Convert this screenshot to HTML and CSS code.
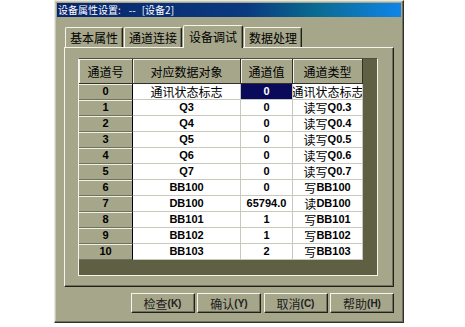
FILE: index.html
```html
<!DOCTYPE html>
<html>
<head>
<meta charset="utf-8">
<link rel="stylesheet" href="styles.css">
</head>
<body>
<div class="dialog">
  <div class="titlebar"><span>设备属性设置:</span><span class="dash">--</span><span>[设备2]</span></div>
  <div class="tabs">
    <div class="tab">基本属性</div>
    <div class="tab">通道连接</div>
    <div class="tab active">设备调试</div>
    <div class="tab">数据处理</div>
  </div>
  <div class="panel">
    <div class="grid">
      <div class="table">
        <div class="h first">通道号</div><div class="h">对应数据对象</div><div class="h">通道值</div><div class="h last">通道类型</div>

        <div class="rh">0</div><div class="c"><span class="n">通讯状态标志</span></div><div class="c sel">0</div><div class="c clip"><span class="n">通讯状态标志</span></div>
        <div class="rh">1</div><div class="c">Q3</div><div class="c">0</div><div class="c"><span class="n">读写</span>Q0.3</div>
        <div class="rh">2</div><div class="c">Q4</div><div class="c">0</div><div class="c"><span class="n">读写</span>Q0.4</div>
        <div class="rh">3</div><div class="c">Q5</div><div class="c">0</div><div class="c"><span class="n">读写</span>Q0.5</div>
        <div class="rh">4</div><div class="c">Q6</div><div class="c">0</div><div class="c"><span class="n">读写</span>Q0.6</div>
        <div class="rh">5</div><div class="c">Q7</div><div class="c">0</div><div class="c"><span class="n">读写</span>Q0.7</div>
        <div class="rh">6</div><div class="c">BB100</div><div class="c">0</div><div class="c"><span class="n">写</span>BB100</div>
        <div class="rh">7</div><div class="c">DB100</div><div class="c">65794.0</div><div class="c"><span class="n">读</span>DB100</div>
        <div class="rh">8</div><div class="c">BB101</div><div class="c">1</div><div class="c"><span class="n">写</span>BB101</div>
        <div class="rh">9</div><div class="c">BB102</div><div class="c">1</div><div class="c"><span class="n">写</span>BB102</div>
        <div class="rh">10</div><div class="c">BB103</div><div class="c">2</div><div class="c"><span class="n">写</span>BB103</div>
      </div>
    </div>
  </div>
  <div class="buttons">
    <div class="btn"><span class="n">检查</span>(K)</div>
    <div class="btn"><span class="n">确认</span>(Y)</div>
    <div class="btn"><span class="n">取消</span>(C)</div>
    <div class="btn"><span class="n">帮助</span>(H)</div>
  </div>
</div>
</body>
</html>
```
FILE: styles.css
```css
* { box-sizing: border-box; }
body {
  margin: 0;
  background: #fff;
  font-family: "Liberation Sans", "Noto Sans CJK SC", sans-serif;
  color: #000;
}
.n { font-weight: normal; font-family: "Noto Sans CJK SC", sans-serif; }

.dialog {
  margin-left: 54px;
  width: 350px;
  height: 323px;
  background: #a6a68b;
  border-left: 1px solid #e8e8e0;
  border-top: 1px solid #e8e8e0;
  border-right: 1px solid #303028;
  border-bottom: 1px solid #303028;
  box-shadow: inset -1px -1px 0 #707060, inset 1px 1px 0 #c8c8b4;
  padding: 2px 2px 0 2px;
}
.titlebar {
  height: 14px;
  background: linear-gradient(90deg, #0a246a 0%, #0a3a80 55%, #0a6a90 75%, #1084e8 100%);
  color: #fff;
  font-family: "Noto Sans CJK SC", sans-serif;
  font-size: 10px;
  line-height: 14px;
  padding-left: 1px;
  display: flex;
  white-space: nowrap;
}
.titlebar .dash { margin: 0 6px 0 8px; }

.tabs {
  display: flex;
  align-items: flex-end;
  height: 22px;
  margin-top: 8px;
  padding-left: 8px;
  gap: 1px;
}
.tab {
  width: 58px;
  height: 20px;
  border-top: 1px solid #f4f4ec;
  border-left: 1px solid #f4f4ec;
  border-right: 1px solid #202018;
  border-top-left-radius: 2px;
  border-top-right-radius: 2px;
  box-shadow: inset -1px 0 0 #707060;
  font-family: "Noto Sans CJK SC", sans-serif;
  font-size: 12px;
  line-height: 19px;
  text-align: center;
  color: #000;
}
.tab.active {
  width: 60px;
  height: 23px;
  margin-bottom: -1px;
  background: #a6a68b;
  position: relative;
  z-index: 1;
  line-height: 21px;
}

.panel {
  margin-left: 7px;
  width: 330px;
  height: 240px;
  border-top: 1px solid #f4f4ec;
  border-left: 1px solid #f4f4ec;
  border-right: 1px solid #202018;
  border-bottom: 1px solid #202018;
  box-shadow: inset -1px -1px 0 #707060;
  padding: 10px 0 0 13px;
}
.grid {
  width: 300px;
  height: 218px;
  background: #5f5f44;
  border: 1px solid #f4f4ec;
  border-top-color: #505040;
}
.table {
  display: grid;
  grid-template-columns: 54px 108px 52px 70px;
  grid-template-rows: 25px repeat(11, 16px);
  width: 284px;
  font-size: 11px;
  font-weight: bold;
}
.h {
  background: #a6a68b;
  border-right: 1px solid #303028;
  border-bottom: 1px solid #303028;
  box-shadow: inset 1px 1px 0 #f0f0e4;
  font-family: "Noto Sans CJK SC", sans-serif;
  font-weight: normal;
  font-size: 12px;
  display: flex;
  align-items: center;
  justify-content: center;
}
.rh {
  background: #a6a68b;
  border-right: 1px solid #000;
  border-bottom: 1px solid #707060;
  box-shadow: inset 0 1px 0 #f0f0e4;
  display: flex;
  align-items: center;
  justify-content: center;
  line-height: 15px;
}
.c {
  background: #fff;
  border-right: 1px solid #c8c8bc;
  border-bottom: 1px solid #c8c8bc;
  display: flex;
  align-items: center;
  justify-content: center;
  overflow: hidden;
  white-space: nowrap;
  font-size: 11px;
  line-height: 15px;
}
.c .n { font-size: 12px; }
.c.sel {
  background: #0a0a5a;
  color: #fff;
}
.c.clip .n { flex-shrink: 0; }

.buttons {
  display: flex;
  justify-content: flex-end;
  gap: 2.5px;
  margin-top: 6px;
  padding-right: 7px;
}
.btn {
  width: 64px;
  height: 20px;
  border-top: 1px solid #f4f4ec;
  border-left: 1px solid #f4f4ec;
  border-right: 1px solid #202018;
  border-bottom: 1px solid #202018;
  box-shadow: inset -1px -1px 0 #707060;
  display: flex;
  align-items: center;
  justify-content: center;
  font-size: 10px;
  font-weight: bold;
  color: #202020;
}
.btn .n { font-size: 12px; }
```
